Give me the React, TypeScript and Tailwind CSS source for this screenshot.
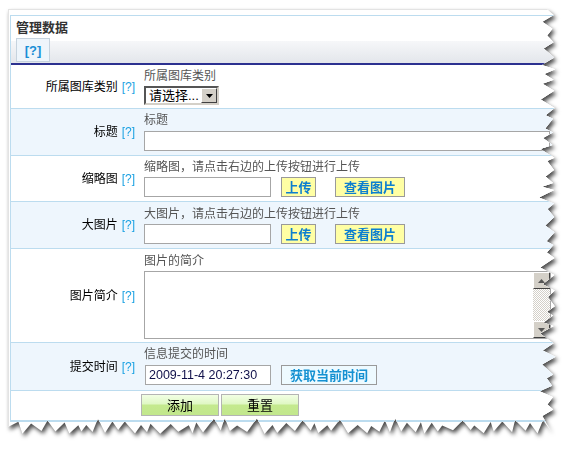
import React from "react";

function mulberry32(a: number) {
  return function () {
    a |= 0;
    a = (a + 0x6d2b79f5) | 0;
    let t = Math.imul(a ^ (a >>> 15), 1 | a);
    t = (t + Math.imul(t ^ (t >>> 7), 61 | t)) ^ t;
    return ((t ^ (t >>> 14)) >>> 0) / 4294967296;
  };
}

function tornPolygon(W: number, H: number) {
  const r = mulberry32(11);
  const pts: string[] = ["0px 0px", `${W - 10}px 0px`];
  let y = 6;
  let out = true;
  while (y < H - 18) {
    const x = out ? W - 1 - r() * 4 : W - 9 - r() * 9;
    pts.push(`${x.toFixed(1)}px ${y.toFixed(1)}px`);
    y += 3 + r() * 7;
    out = !out;
  }
  pts.push(`${W - 6}px ${H - 4}px`);
  let x = W - 14;
  out = false;
  while (x > 6) {
    const yy = out ? H - 1 - r() * 4 : H - 9 - r() * 8;
    pts.push(`${x.toFixed(1)}px ${yy.toFixed(1)}px`);
    x -= 3 + r() * 8;
    out = !out;
  }
  pts.push(`0px ${H - 8}px`);
  return `polygon(${pts.join(",")})`;
}

function Row({
  label,
  rowClass,
  children,
}: {
  label?: string;
  rowClass: string;
  children: React.ReactNode;
}) {
  return (
    <div className={`flex border-b border-[#bcdcef] ${rowClass}`}>
      <div className="w-[130px] shrink-0 flex items-center justify-end pr-[6px] text-[12px] text-black leading-none">
        {label ? (
          <>
            <span>{label}</span>
            <span className="ml-[4px] text-[#1ba1e2]">[?]</span>
          </>
        ) : null}
      </div>
      <div className="flex-1 min-w-0">{children}</div>
    </div>
  );
}

function Desc({ children }: { children: React.ReactNode }) {
  return <div className="pl-[3px] text-[12px] leading-[16px] text-[#555]">{children}</div>;
}

function YellowBtn({ children, w }: { children: React.ReactNode; w: string }) {
  return (
    <div
      className={`${w} h-[20px] border border-[#9a9a9a] bg-[#ffffa4] flex items-center justify-center text-[13px] font-bold text-[#0d7fcf] leading-none`}
    >
      {children}
    </div>
  );
}

function ScrollBtn({ up }: { up: boolean }) {
  return (
    <div className="w-[17px] h-[17px] bg-[#d4d0c8] border border-t-white border-l-white border-r-[#404040] border-b-[#404040] flex items-center justify-center">
      <svg width="7" height="4" viewBox="0 0 7 4">
        {up ? <path d="M0 4 L3.5 0 L7 4 Z" fill="#555" /> : <path d="M0 0 L3.5 4 L7 0 Z" fill="#555" />}
      </svg>
    </div>
  );
}

export default function App() {
  const clip = tornPolygon(549, 426);
  return (
    <div className="w-[571px] h-[451px] overflow-hidden bg-white pl-[8px] pt-[9px] font-['Liberation_Sans','Noto_Sans_CJK_SC',sans-serif]">
      <div className="w-[549px] drop-shadow-[2px_3px_2px_rgba(0,0,0,0.7)]">
        <div
          className="w-[549px] h-[426px] overflow-hidden bg-white border-l border-t border-[#e3e3e3]"
          style={{ clipPath: clip }}
        >
          <div className="ml-[1px] mt-[5px] w-[580px] border border-[#bcdcef] bg-white">
            {/* title */}
            <div className="h-[22px] pl-[5px] flex items-center text-[13px] font-bold text-[#333] leading-none">
              管理数据
            </div>
            {/* tab band */}
            <div className="h-[27px] border-b-2 border-[#2c3190] bg-[linear-gradient(to_bottom,#ffffff_0px,#ffffff_3px,#f6f7f9_3px,#e3e6eb_100%)] pl-[5px]">
              <div className="w-[34px] h-[24px] border border-[#c6d3de] bg-[#eef5fb] flex items-center justify-center text-[13px] font-bold text-[#1a8fd6] leading-none">
                [?]
              </div>
            </div>

            {/* row 1 */}
            <Row label="所属图库类别" rowClass="h-[44px] bg-white">
              <div className="pt-[3px]">
                <Desc>所属图库类别</Desc>
                <div className="ml-[3px] mt-[2px] w-[75px] h-[19px] border-2 border-t-[#555] border-l-[#555] border-r-[#d4d0c8] border-b-[#d4d0c8] bg-white flex items-center">
                  <span className="flex-1 pl-[3px] text-[13px] leading-none text-black whitespace-nowrap">请选择...</span>
                  <div className="w-[16px] h-[15px] bg-[#d4d0c8] border border-t-white border-l-white border-r-[#404040] border-b-[#404040] flex items-center justify-center">
                    <svg width="7" height="4" viewBox="0 0 7 4">
                      <path d="M0 0 L3.5 4 L7 0 Z" fill="#000" />
                    </svg>
                  </div>
                </div>
              </div>
            </Row>

            {/* row 2 */}
            <Row label="标题" rowClass="h-[47px] bg-[#eef6fd]">
              <div className="pt-[3px]">
                <Desc>标题</Desc>
                <div className="ml-[3px] mt-[3px] w-[406px] h-[20px] border border-[#a6a6a6] bg-white" />
              </div>
            </Row>

            {/* row 3 */}
            <Row label="缩略图" rowClass="h-[46px] bg-white">
              <div className="pt-[3px]">
                <Desc>缩略图，请点击右边的上传按钮进行上传</Desc>
                <div className="ml-[3px] mt-[2px] flex items-center">
                  <div className="w-[127px] h-[20px] border border-[#a6a6a6] bg-white" />
                  <div className="ml-[10px]">
                    <YellowBtn w="w-[35px]">上传</YellowBtn>
                  </div>
                  <div className="ml-[19px]">
                    <YellowBtn w="w-[70px]">查看图片</YellowBtn>
                  </div>
                </div>
              </div>
            </Row>

            {/* row 4 */}
            <Row label="大图片" rowClass="h-[47px] bg-[#eef6fd]">
              <div className="pt-[4px]">
                <Desc>大图片，请点击右边的上传按钮进行上传</Desc>
                <div className="ml-[3px] mt-[2px] flex items-center">
                  <div className="w-[127px] h-[20px] border border-[#a6a6a6] bg-white" />
                  <div className="ml-[10px]">
                    <YellowBtn w="w-[35px]">上传</YellowBtn>
                  </div>
                  <div className="ml-[19px]">
                    <YellowBtn w="w-[70px]">查看图片</YellowBtn>
                  </div>
                </div>
              </div>
            </Row>

            {/* row 5 */}
            <Row label="图片简介" rowClass="h-[94px] bg-white">
              <div className="pt-[4px]">
                <Desc>图片的简介</Desc>
                <div className="ml-[3px] mt-[2px] w-[407px] h-[68px] border border-[#a6a6a6] bg-white flex justify-end">
                  <div className="w-[17px] h-full flex flex-col bg-[repeating-conic-gradient(#d4d0c8_0%_25%,#ffffff_0%_50%)] bg-[length:2px_2px]">
                    <ScrollBtn up={true} />
                    <div className="flex-1" />
                    <ScrollBtn up={false} />
                  </div>
                </div>
              </div>
            </Row>

            {/* row 6 */}
            <Row label="提交时间" rowClass="h-[48px] bg-[#eef6fd]">
              <div className="pt-[3px]">
                <Desc>信息提交的时间</Desc>
                <div className="ml-[4px] mt-[3px] flex items-center">
                  <div className="w-[126px] h-[20px] border border-[#a6a6a6] bg-white flex items-center pl-[3px] text-[12.5px] leading-none text-[#10104a] whitespace-nowrap">
                    2009-11-4 20:27:30
                  </div>
                  <div className="ml-[10px] w-[96px] h-[20px] border border-[#9a9a9a] bg-[#eefaff] flex items-center justify-center text-[13px] font-bold text-[#1591d2] leading-none">
                    获取当前时间
                  </div>
                </div>
              </div>
            </Row>

            {/* row 7 */}
            <Row rowClass="h-[30px] bg-white">
              <div className="pt-[3px] flex gap-[2px]">
                <div className="w-[78px] h-[22px] border border-[#b4b4b4] bg-[linear-gradient(to_bottom,#f2ffe4_0%,#dff7c4_45%,#c4e98e_50%,#c2e78c_100%)] flex items-center justify-center text-[13px] text-black leading-none">
                  添加
                </div>
                <div className="w-[78px] h-[22px] border border-[#b4b4b4] bg-[linear-gradient(to_bottom,#f2ffe4_0%,#dff7c4_45%,#c4e98e_50%,#c2e78c_100%)] flex items-center justify-center text-[13px] text-black leading-none">
                  重置
                </div>
              </div>
            </Row>
          </div>
        </div>
      </div>
    </div>
  );
}
